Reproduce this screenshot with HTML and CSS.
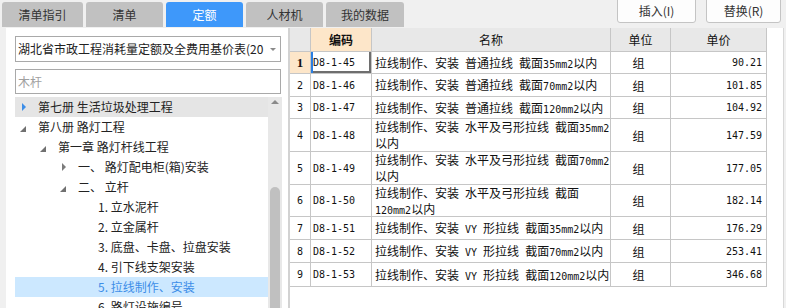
FILE: index.html
```html
<!DOCTYPE html>
<html lang="zh-CN">
<head>
<meta charset="utf-8">
<title>定额</title>
<link rel="stylesheet" href="styles.css">
</head>
<body>
<div class="app">
  <header class="topbar">
    <nav class="tabs">
      <div class="tab t1">清单指引</div>
      <div class="tab">清单</div>
      <div class="tab active">定额</div>
      <div class="tab">人材机</div>
      <div class="tab t5">我的数据</div>
    </nav>
    <div class="actions">
      <button class="btn b1">插入(I)</button>
      <button class="btn b2">替换(R)</button>
    </div>
  </header>
  <main class="main">
    <section class="left">
      <div class="select"><span class="sel-text">湖北省市政工程消耗量定额及全费用基价表(20</span><span class="caret"></span></div>
      <input class="search" type="text" placeholder="木杆">
      <div class="tree">
        <ul class="tree-list">
          <li class="node hover lv0"><span class="arr closed blue"></span><span>第七册 生活垃圾处理工程</span></li>
          <li class="node lv0"><span class="arr open"></span><span>第八册 路灯工程</span></li>
          <li class="node lv1"><span class="arr open"></span><span>第一章 路灯杆线工程</span></li>
          <li class="node lv2"><span class="arr closed"></span><span>一、 路灯配电柜(箱)安装</span></li>
          <li class="node lv2"><span class="arr open"></span><span>二、 立杆</span></li>
          <li class="node lv3"><span class="arr"></span><span>1. 立水泥杆</span></li>
          <li class="node lv3"><span class="arr"></span><span>2. 立金属杆</span></li>
          <li class="node lv3"><span class="arr"></span><span>3. 底盘、卡盘、拉盘安装</span></li>
          <li class="node lv3"><span class="arr"></span><span>4. 引下线支架安装</span></li>
          <li class="node lv3 selected"><span class="arr"></span><span>5. 拉线制作、安装</span></li>
          <li class="node lv3"><span class="arr"></span><span>6. 路灯设施编号</span></li>
        </ul>
        <div class="vscroll"><span class="up"></span><span class="thumb"></span></div>
      </div>
    </section>
    <section class="right">
      <div class="grid">
        <div class="c h corner"></div>
        <div class="c h sel">编码</div>
        <div class="c h">名称</div>
        <div class="c h">单位</div>
        <div class="c h">单价</div>

        <div class="c rh sel">1</div>
        <div class="c code focus">D8-1-45</div>
        <div class="c name"><span>拉线制作、安装<i> </i>普通拉线<i> </i>截面<i>35mm2</i>以内</span></div>
        <div class="c unit">组</div>
        <div class="c price">90.21</div>

        <div class="c rh">2</div>
        <div class="c code">D8-1-46</div>
        <div class="c name"><span>拉线制作、安装<i> </i>普通拉线<i> </i>截面<i>70mm2</i>以内</span></div>
        <div class="c unit">组</div>
        <div class="c price">101.85</div>

        <div class="c rh">3</div>
        <div class="c code">D8-1-47</div>
        <div class="c name"><span>拉线制作、安装<i> </i>普通拉线<i> </i>截面<i>120mm2</i>以内</span></div>
        <div class="c unit">组</div>
        <div class="c price">104.92</div>

        <div class="c rh">4</div>
        <div class="c code">D8-1-48</div>
        <div class="c name"><span>拉线制作、安装<i> </i>水平及弓形拉线<i> </i>截面<i>35mm2</i><br>以内</span></div>
        <div class="c unit">组</div>
        <div class="c price">147.59</div>

        <div class="c rh">5</div>
        <div class="c code">D8-1-49</div>
        <div class="c name"><span>拉线制作、安装<i> </i>水平及弓形拉线<i> </i>截面<i>70mm2</i><br>以内</span></div>
        <div class="c unit">组</div>
        <div class="c price">177.05</div>

        <div class="c rh">6</div>
        <div class="c code">D8-1-50</div>
        <div class="c name"><span>拉线制作、安装<i> </i>水平及弓形拉线<i> </i>截面<br><i>120mm2</i>以内</span></div>
        <div class="c unit">组</div>
        <div class="c price">182.14</div>

        <div class="c rh">7</div>
        <div class="c code">D8-1-51</div>
        <div class="c name"><span>拉线制作、安装<i> VY </i>形拉线<i> </i>截面<i>35mm2</i>以内</span></div>
        <div class="c unit">组</div>
        <div class="c price">176.29</div>

        <div class="c rh">8</div>
        <div class="c code">D8-1-52</div>
        <div class="c name"><span>拉线制作、安装<i> VY </i>形拉线<i> </i>截面<i>70mm2</i>以内</span></div>
        <div class="c unit">组</div>
        <div class="c price">253.41</div>

        <div class="c rh">9</div>
        <div class="c code">D8-1-53</div>
        <div class="c name"><span>拉线制作、安装<i> VY </i>形拉线<i> </i>截面<i>120mm2</i>以内</span></div>
        <div class="c unit">组</div>
        <div class="c price">346.68</div>
      </div>
    </section>
  </main>
</div>
</body>
</html>
```

FILE: styles.css
```css
* { box-sizing: border-box; margin: 0; padding: 0; }
html, body { width: 786px; height: 308px; overflow: hidden; }
body {
  background: #f0f0f0;
  font-family: "Noto Sans CJK SC", "Microsoft YaHei", sans-serif;
  font-size: 12px;
  color: #222;
}

/* top bar */
.topbar { display: flex; justify-content: space-between; height: 28px; }
.tabs { display: flex; gap: 3px; padding: 2px 0 0 2px; }
.tab {
  width: 77px; height: 25px;
  background: #c1c1c1;
  border-radius: 3px 3px 0 0;
  display: flex; align-items: center; justify-content: center;
  color: #333; line-height: 1;
}
.tab.t1 { width: 81px; }
.tab.t5 { width: 78px; }
.tab.active { background: #3e98fa; color: #fff; }

.actions { display: flex; gap: 10px; padding-right: 5px; align-items: flex-start; }
.btn {
  height: 25px; margin-top: -2px;
  background: #fdfdfd;
  border: 1px solid #c4c4c4;
  border-radius: 0 0 3px 3px;
  font: 12px "Noto Sans CJK SC", sans-serif;
  color: #333;
  line-height: 1;
}
.b1 { width: 79px; }
.b2 { width: 75px; }

/* main */
.main { display: flex; height: 280px; }

.left {
  margin-left: 6px; width: 282px;
  background: #fff;
  padding: 8px 0 0 9px;
  display: flex; flex-direction: column;
}
.select {
  width: 266px; height: 26px;
  border: 1px solid #a9a9a9;
  padding-left: 2px;
  display: flex; align-items: center;
  line-height: 1;
}
.sel-text { white-space: nowrap; color: #222; }
.caret {
  margin-left: auto; margin-right: 4px;
  border-top: 3px solid #8a8a8a;
  border-left: 3px solid transparent;
  border-right: 3px solid transparent;
}
.search {
  margin-top: 7px;
  width: 266px; height: 25px;
  border: 1px solid #a9a9a9;
  padding-left: 2px;
  font: 12px "Noto Sans CJK SC", sans-serif;
  outline: none;
}
.search::placeholder { color: #a0a0a0; }

.tree { margin-top: 3px; width: 267px; flex: 1; display: flex; overflow: hidden; }
.tree-list { list-style: none; flex: 1; }
.node {
  height: 20px;
  display: flex; align-items: center;
  white-space: nowrap;
  padding-left: 5px;
  line-height: 1;
  color: #222;
}
.node.lv1 { padding-left: 25px; }
.node.lv2 { padding-left: 45px; }
.node.lv3 { padding-left: 65px; }
.node.hover { background: #e5e5e5; }
.node.selected { background: #cce8ff; color: #3d8ee8; }

.arr { width: 18px; flex: none; display: flex; align-items: center; }
.arr.closed::before {
  content: "";
  margin-left: 2px;
  border-left: 4px solid #7c7c7c;
  border-top: 4px solid transparent;
  border-bottom: 4px solid transparent;
}
.arr.blue::before { border-left-color: #3d8ee8; }
.arr.open::before {
  content: "";
  border-bottom: 6px solid #707070;
  border-left: 6px solid transparent;
  transform: translateY(2px);
}

.vscroll {
  width: 14px; flex: none;
  background: #e8e8e8;
  display: flex; flex-direction: column; align-items: center;
}
.up {
  margin-top: 3px;
  border-bottom: 4px solid #8a8a8a;
  border-left: 4px solid transparent;
  border-right: 4px solid transparent;
}
.thumb {
  margin-top: 83px;
  width: 10px; height: 200px;
  background: #c0c0c0;
  border-radius: 5px 5px 0 0;
}

/* table */
.right {
  width: 496px;
  background: #fff;
  border-left: 2px solid #d2d2d2;
  border-right: 1px solid #d8d8d8;
}
.grid {
  display: grid;
  grid-template-columns: 21px 61px 239px 60px 96px;
  grid-template-rows: 24px 22px 23px 22px 33px 33px 32px 23px 23px 24px;
  width: 477px;
}
.c {
  border-right: 1px solid #c6c6c6;
  border-bottom: 1px solid #c6c6c6;
  display: flex; align-items: center;
  white-space: nowrap; overflow: hidden;
  color: #111;
}
.h { background: #e8e8e8; justify-content: center; line-height: 1; }
.h.sel { background: #fde6c9; font-weight: bold; }
.rh { justify-content: center; font: 10px "DejaVu Sans Mono", monospace; }
.rh.sel { background: #fde6c9; font: bold 13px "Liberation Serif", serif; }
.code { padding-left: 2px; font: 10px "DejaVu Sans Mono", monospace; }
.focus { box-shadow: inset 2px 0 0 #2a7fe2, inset -2px -2px 0 #6e6e6e; }
.name { padding-left: 3px; line-height: 16px; }
.name i { font-style: normal; font: 10px "DejaVu Sans Mono", monospace; }
.unit { justify-content: center; padding-right: 4px; }
.price { justify-content: flex-end; padding-right: 4px; font: 10px "DejaVu Sans Mono", monospace; }
```
